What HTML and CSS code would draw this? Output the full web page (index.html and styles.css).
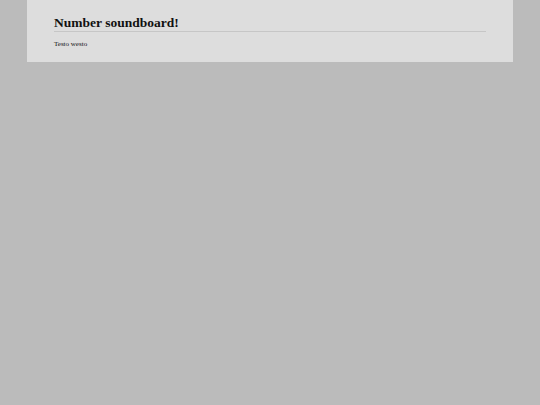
FILE: index.html
```html
<!DOCTYPE html>
<html lang="it">
<head>
<meta charset="utf-8">
<title>Number soundboard!</title>
<link rel="stylesheet" href="styles.css">
</head>
<body>
<main class="page">
  <h1 class="title">Number soundboard!</h1>
  <p class="lead">Testo westo</p>
</main>
</body>
</html>
```

FILE: styles.css
```css
html, body {
  margin: 0;
  padding: 0;
  height: 100%;
}

body {
  background: #bbbbbb;
  font-family: "Liberation Serif", "Times New Roman", serif;
  color: #111111;
}

.page {
  width: 486px;
  margin: 0 auto;
  box-sizing: border-box;
  padding: 15px 27px 13px;
  background: #dddddd;
}

.title {
  margin: 0;
  font-size: 13.5px;
  line-height: 16px;
  font-weight: bold;
  border-bottom: 1px solid #c6c6c6;
}

.lead {
  margin: 7px 0 0;
  font-size: 7px;
  line-height: 10px;
}
```
